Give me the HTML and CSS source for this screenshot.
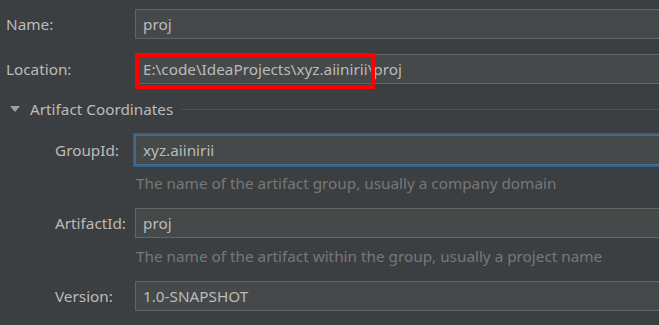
FILE: index.html
```html
<!DOCTYPE html>
<html>
<head>
<meta charset="utf-8">
<link rel="stylesheet" href="styles.css">
</head>
<body>
<div class="form">
  <div class="row row-name">
    <label class="label">Name:</label>
    <div class="field">proj</div>
  </div>
  <div class="row row-loc">
    <label class="label">Location:</label>
    <div class="field field-loc">E:\code\IdeaProjects\xyz.aiinirii\proj<span class="mark"></span></div>
  </div>
  <div class="section">
    <span class="tri"></span>
    <span class="section-title">Artifact Coordinates</span>
    <span class="sep"></span>
  </div>
  <div class="sub">
    <div class="row row-group">
      <label class="label sublabel">GroupId:</label>
      <div class="field focused">xyz.aiinirii</div>
    </div>
    <div class="hint">The name of the artifact group, usually a company domain</div>
    <div class="row row-art">
      <label class="label sublabel">ArtifactId:</label>
      <div class="field">proj</div>
    </div>
    <div class="hint">The name of the artifact within the group, usually a project name</div>
    <div class="row row-ver">
      <label class="label sublabel">Version:</label>
      <div class="field">1.0-SNAPSHOT</div>
    </div>
  </div>
</div>
</body>
</html>
```
FILE: styles.css
```css
html, body {
  margin: 0;
  padding: 0;
  background: #3c3f41;
  overflow: hidden;
}
body {
  width: 659px;
  height: 325px;
  font-family: "Noto Sans", "Open Sans", sans-serif;
  font-size: 15.3px;
  color: #bbbbbb;
}
.form {
  display: flex;
  flex-direction: column;
  padding-top: 9px;
  overflow: hidden;
}
.row {
  display: flex;
  align-items: center;
  height: 30px;
}
.label {
  width: 129px;
  padding-left: 6px;
  flex: none;
  color: #bbbbbb;
}
.sublabel {
  padding-left: 55px;
  width: 80px;
}
.field {
  position: relative;
  flex: none;
  box-sizing: border-box;
  width: 540px;
  height: 30px;
  line-height: 28px;
  padding-left: 7px;
  background: #45494a;
  border: 1px solid #646464;
  color: #bbbbbb;
  white-space: nowrap;
}
.row-loc {
  margin-top: 15px;
}
.mark {
  position: absolute;
  left: -1px;
  top: -2px;
  width: 240px;
  height: 36px;
  box-sizing: border-box;
  border: 4px solid #ff0000;
}
.section {
  display: flex;
  align-items: center;
  height: 20px;
  margin-top: 15px;
}
.tri {
  width: 0;
  height: 0;
  margin-left: 10px;
  border-left: 5px solid transparent;
  border-right: 5px solid transparent;
  border-top: 6px solid #a0a0a0;
}
.section-title {
  margin-left: 10px;
}
.sep {
  flex: 1;
  height: 1px;
  margin-left: 9px;
  background: #4e5254;
}
.sub {
  display: flex;
  flex-direction: column;
}
.row-group {
  margin-top: 16px;
}
.focused {
  border: 1px solid #466d94;
  box-shadow: 0 0 0 2px #3d6185;
}
.hint {
  margin-left: 136px;
  height: 20px;
  line-height: 20px;
  margin-top: 8px;
  color: #787878;
  white-space: nowrap;
}
.row-art, .row-ver {
  margin-top: 15px;
}
```
